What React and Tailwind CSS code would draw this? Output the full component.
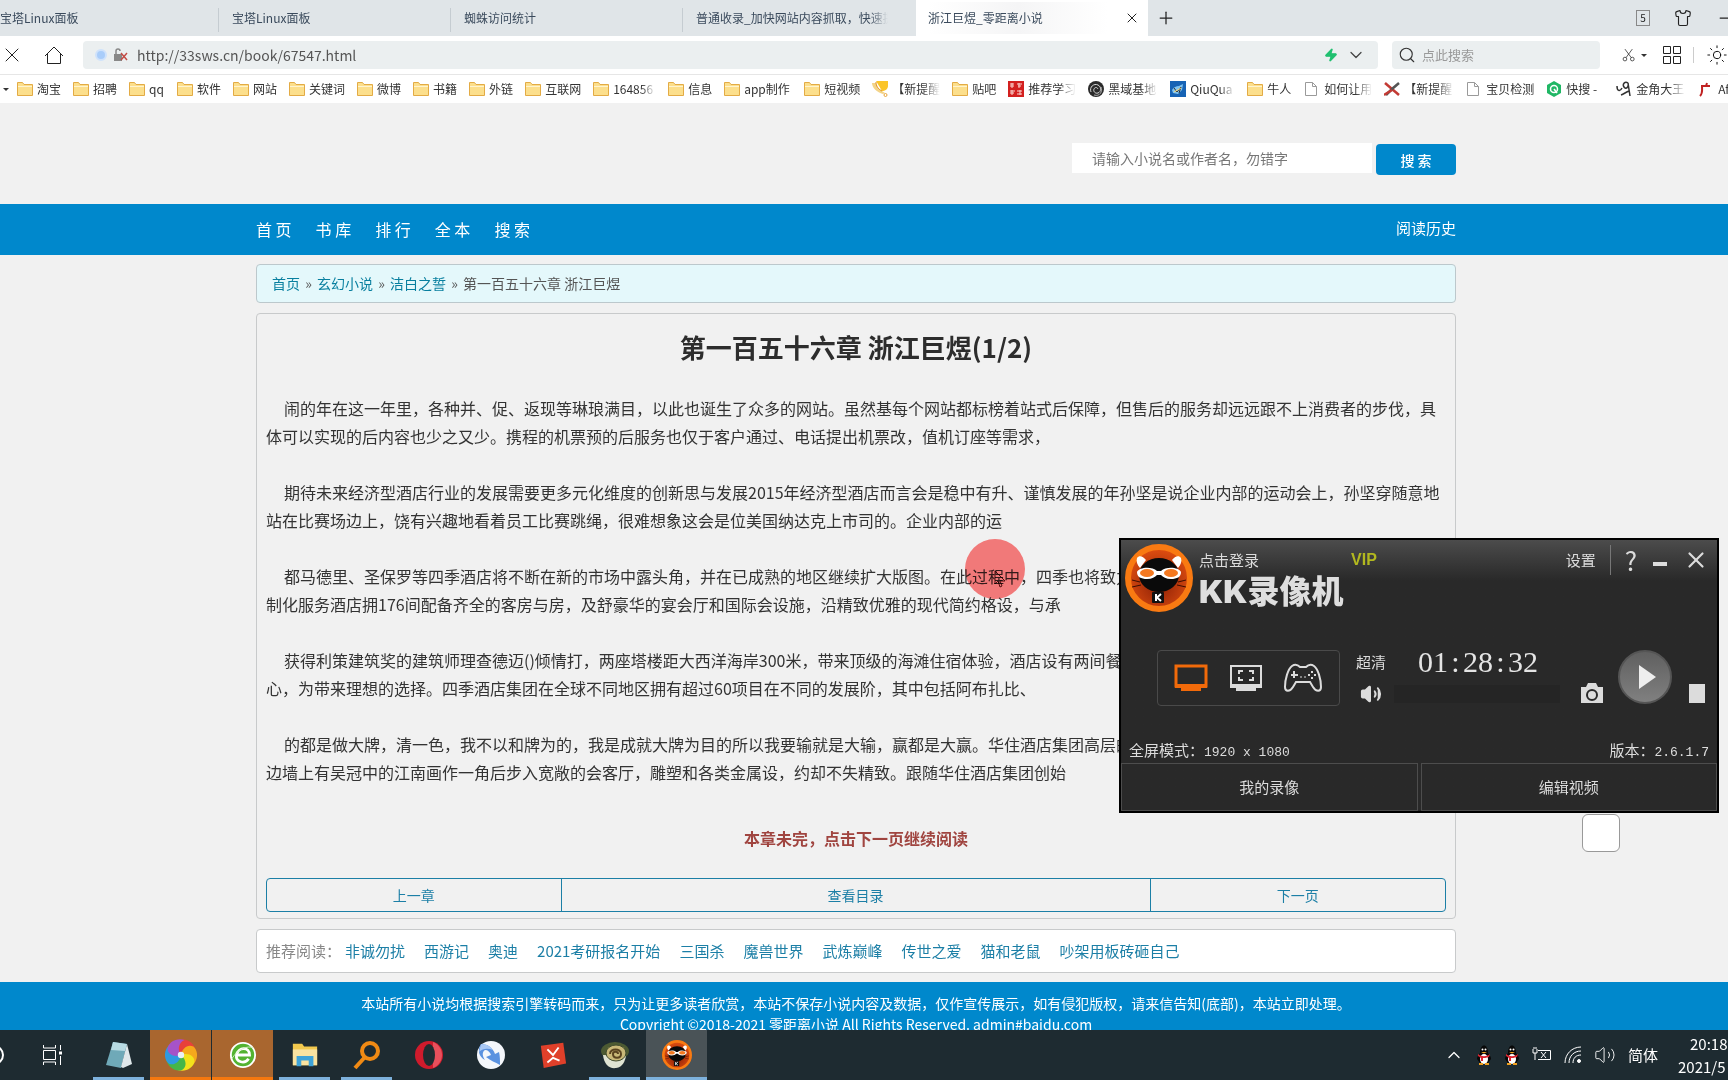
import { ChevronDown, ChevronUp, Minus, Plus, Search, Shirt, Sun, Volume2, X, Zap } from 'lucide-react'

const TABS = [
  { title: '宝塔Linux面板', className: 'w-[219px]' },
  { title: '宝塔Linux面板', className: 'w-[232px] pl-[13px]' },
  { title: '蜘蛛访问统计', className: 'w-[232px] pl-[13px]' },
  { title: '普通收录_加快网站内容抓取，快速提', className: 'w-[233px] pl-[13px]', fade: true },
]

const BOOKMARKS = [
  { icon: 'folder', label: '淘宝' },
  { icon: 'folder', label: '招聘' },
  { icon: 'folder', label: 'qq', width: 'w-4' },
  { icon: 'folder', label: '软件' },
  { icon: 'folder', label: '网站' },
  { icon: 'folder', label: '关键词' },
  { icon: 'folder', label: '微博' },
  { icon: 'folder', label: '书籍' },
  { icon: 'folder', label: '外链' },
  { icon: 'folder', label: '互联网' },
  { icon: 'folder', label: '164856', width: 'w-[43px]', fade: true },
  { icon: 'folder', label: '信息' },
  { icon: 'folder', label: 'app制作', width: 'w-12' },
  { icon: 'folder', label: '短视频' },
  { icon: 'trophy', label: '【新提醒', width: 'w-12', fade: true },
  { icon: 'folder', label: '贴吧' },
  { icon: 'seal', label: '推荐学习', width: 'w-12', fade: true },
  { icon: 'swirl', label: '黑域基地', width: 'w-[50px]', fade: true },
  { icon: 'photo', label: 'QiuQua', width: 'w-[45px]', fade: true },
  { icon: 'folder', label: '牛人', width: 'w-[25px]' },
  { icon: 'file', label: '如何让用', width: 'w-12', fade: true },
  { icon: 'cross', label: '【新提醒', width: 'w-[50px]', fade: true },
  { icon: 'file', label: '宝贝检测', width: 'w-12' },
  { icon: 'green', label: '快搜 -', width: 'w-[38px]' },
  { icon: 'king', label: '金角大王', width: 'w-[50px]', fade: true },
  { icon: 'red', label: 'Af', width: 'w-[25px]' },
]

const NAV = ['首 页', '书 库', '排 行', '全 本', '搜 索']

const PARAGRAPHS = [
  [
    '闹的年在这一年里，各种并、促、返现等琳琅满目，以此也诞生了众多的网站。虽然基每个网站都标榜着站式后保障，但售后的服务却远远跟不上消费者的步伐，具',
    '体可以实现的后内容也少之又少。携程的机票预的后服务也仅于客户通过、电话提出机票改，值机订座等需求，',
  ],
  [
    '期待未来经济型酒店行业的发展需要更多元化维度的创新思与发展2015年经济型酒店而言会是稳中有升、谨慎发展的年孙坚是说企业内部的运动会上，孙坚穿随意地',
    '站在比赛场边上，饶有兴趣地看着员工比赛跳绳，很难想象这会是位美国纳达克上市司的。企业内部的运',
  ],
  [
    '都马德里、圣保罗等四季酒店将不断在新的市场中露头角，并在已成熟的地区继续扩大版图。在此过程中，四季也将致力',
    '制化服务酒店拥176间配备齐全的客房与房，及舒豪华的宴会厅和国际会设施，沿精致优雅的现代简约格设，与承',
  ],
  [
    '获得利策建筑奖的建筑师理查德迈()倾情打，两座塔楼距大西洋海岸300米，带来顶级的海滩住宿体验，酒店设有两间餐厅',
    '心，为带来理想的选择。四季酒店集团在全球不同地区拥有超过60项目在不同的发展阶，其中包括阿布扎比、',
  ],
  [
    '的都是做大牌，清一色，我不以和牌为的，我是成就大牌为目的所以我要输就是大输，赢都是大赢。华住酒店集团高层的',
    '边墙上有吴冠中的江南画作一角后步入宽敞的会客厅，雕塑和各类金属设，约却不失精致。跟随华住酒店集团创始',
  ],
]

const RECOMMENDED = ['非诚勿扰', '西游记', '奥迪', '2021考研报名开始', '三国杀', '魔兽世界', '武炼巅峰', '传世之爱', '猫和老鼠', '吵架用板砖砸自己']

function BookmarkIcon({ name }) {
  switch (name) {
    case 'folder':
      return (
        <svg viewBox="0 0 16 16" className="h-4 w-4 shrink-0">
          <path d="M.5 14.500v-13h5l1.500 2h8.500v11z" fill="#fcdf8c" stroke="#e3ab45" />
          <path d="M1 5.500h14" stroke="#fff3cf" />
        </svg>
      )
    case 'trophy':
      return (
        <svg viewBox="0 0 16 16" className="h-4 w-4 shrink-0">
          <path d="M4 0h12v5c0 3-3 5-6 5z" fill="#fbc52a" />
          <path d="M0 2h4c0 3 2 6 6 8l3 2-2 1C5 11 0 7 0 2z" fill="#f3d489" />
          <path d="M4 1c0 4 2 7 6 9" stroke="#e08e1b" fill="none" />
          <circle cx="13.500" cy="14" r="1.500" fill="none" stroke="#eaa63a" />
        </svg>
      )
    case 'seal':
      return (
        <svg viewBox="0 0 16 16" className="h-4 w-4 shrink-0">
          <rect width="16" height="16" fill="#d3201f" />
          <path d="M2 3h4M2 5h4M4 2v5M9 3h5M10 5h3M11 2v5M2 10h5M2 12h4M4 9v5M9 10h5M9 13h5M12 9v5" stroke="#fbd5d0" />
        </svg>
      )
    case 'swirl':
      return (
        <svg viewBox="0 0 16 16" className="h-4 w-4 shrink-0" fill="none">
          <circle cx="8" cy="8" r="8" fill="#2a2a2a" />
          <path d="M3 11C1 6 6 2 10 4s3 7 0 8-5-2-4-4 3-2 4 0" stroke="#d8d8d8" />
          <path d="M6 14c6 2 9-4 7-8" stroke="#aaa" />
        </svg>
      )
    case 'photo':
      return (
        <svg viewBox="0 0 16 16" className="h-4 w-4 shrink-0">
          <rect width="16" height="16" fill="#1763b5" />
          <path d="M2 9c2-3 4-4 7-4l4-2-1 6-4 4-5-1z" fill="#7fc3f0" />
          <path d="M4 7l3 4 4-5-2 6" stroke="#333" fill="none" />
          <path d="M4 11l7-4" stroke="#f4d67a" fill="none" />
        </svg>
      )
    case 'file':
      return (
        <svg viewBox="0 0 16 16" className="h-4 w-4 shrink-0">
          <path d="M1.500 1.500h7l4 4v9h-11z" fill="#fff" stroke="#9a9a9a" />
          <path d="M8.500 1.500v4h4" fill="none" stroke="#9a9a9a" />
        </svg>
      )
    case 'cross':
      return (
        <svg viewBox="0 0 16 16" className="h-4 w-4 shrink-0" fill="none" strokeWidth="2.500">
          <path d="M1 2l14 12" stroke="#c33a34" />
          <path d="M15 2L8 8l-6 6" stroke="#555" />
          <path d="M0 14l8-5" stroke="#c33a34" />
        </svg>
      )
    case 'green':
      return (
        <svg viewBox="0 0 16 16" className="h-4 w-4 shrink-0">
          <path d="M8 0l7 4v8l-7 4-7-4V4z" fill="#20b765" />
          <circle cx="8" cy="8" r="3.500" fill="none" stroke="#fff" strokeWidth="1.500" />
          <path d="M8 8l3 4" stroke="#fff" strokeWidth="1.500" />
        </svg>
      )
    case 'king':
      return (
        <svg viewBox="0 0 16 16" className="h-4 w-4 shrink-0" fill="none" stroke="#333" strokeWidth="1.500">
          <path d="M1 5c0 5 3 6 5 2M12 2C9 0 6 3 8 6s5 0 4-4l2 13M5 14c3-1 5-3 8-4" />
        </svg>
      )
    default:
      return (
        <svg viewBox="0 0 16 16" className="h-4 w-4 shrink-0" fill="none" stroke="#c02222" strokeWidth="2">
          <path d="M2 15C5 12 4 8 4 5h8M8 5l1-3" />
        </svg>
      )
  }
}

function BrowserChrome() {
  return (
    <header className="shrink-0 overflow-hidden bg-white">
      <div className="flex h-9 bg-[#e0e5e8] text-xs text-[#3a4a5c]">
        {TABS.map((tab, i) => (
          <button key={i} className={`relative flex shrink-0 items-center text-left ${tab.className}`}>
            <span className={`max-w-[192px] overflow-hidden whitespace-nowrap ${tab.fade ? '[mask-image:linear-gradient(to_right,#000_90%,transparent)]' : ''}`}>
              {tab.title}
            </span>
            {i < 3 && <span className="absolute top-2 right-0 h-6 w-px bg-[#c5ccd1]" />}
          </button>
        ))}
        <div className="flex w-[232px] shrink-0 items-center bg-white pr-2 pl-3">
          <button className="flex-1 bg-linear-to-r from-white via-[#f5f5f6] to-white py-2 text-left">浙江巨煜_零距离小说</button>
          <button aria-label="关闭标签页" className="ml-4"><X size={16} strokeWidth={1.5} color="#222" /></button>
        </div>
        <button aria-label="新标签页" className="ml-2"><Plus size={20} strokeWidth={1.5} color="#222" /></button>
        <div className="-mr-2 ml-auto flex shrink-0 items-center gap-6 text-[#222]">
          <span className="flex h-4 w-[14px] items-center justify-center border border-[#888] text-[10px]">5</span>
          <button aria-label="皮肤"><Shirt size={18} strokeWidth={1.5} /></button>
          <button aria-label="最小化"><Minus size={20} strokeWidth={1.5} /></button>
        </div>
      </div>

      <div className="flex h-[38px] items-center">
        <button aria-label="停止"><X size={24} strokeWidth={1} color="#222" /></button>
        <button aria-label="主页" className="ml-5">
          <svg viewBox="0 0 20 20" className="h-5 w-5" fill="none" stroke="#222">
            <path d="M1 11l9-9 9 9M3.500 9v9.500h13V9" />
          </svg>
        </button>
        <div className="ml-[19px] flex h-7 flex-1 items-center rounded bg-[#ebeff0] pr-3 pl-3">
          <span className="h-3 w-3 rounded-full border-2 border-[#cfe2fb] bg-[#a9cdfa]" />
          <svg viewBox="0 0 16 14" className="ml-1.5 h-3.5 w-4" fill="none">
            <path d="M1 6h8v7H1z" fill="#888" />
            <path d="M3 6V3a2 2 0 014 0" stroke="#888" strokeWidth="1.500" />
            <path d="M8 5l6 7M14 5l-6 7" stroke="#c34a44" strokeWidth="1.500" />
          </svg>
          <input
            aria-label="网址"
            defaultValue="http://33sws.cn/book/67547.html"
            className="ml-2 flex-1 bg-transparent text-sm text-[#555] outline-none"
          />
          <Zap size={14} fill="#20c070" color="#20c070" />
          <ChevronDown size={20} strokeWidth={1.5} color="#444" className="ml-2" />
        </div>
        <label className="ml-3.5 flex h-7 w-[208px] shrink-0 items-center rounded bg-[#ebeff0]">
          <Search size={18} strokeWidth={1.5} color="#333" className="ml-1.5" />
          <input aria-label="搜索" placeholder="点此搜索" className="ml-1.5 w-40 bg-transparent text-[13px] outline-none placeholder:text-[#999]" />
        </label>
        <div className="flex w-[128px] shrink-0 items-center overflow-hidden pl-[22px]">
          <svg viewBox="0 0 18 18" className="h-[18px] w-[18px]" fill="none" stroke="#222">
            <path d="M4 1l8.500 11.500M14 1L5.500 12.500" />
            <circle cx="4" cy="14.500" r="2.500" />
            <circle cx="14" cy="14.500" r="2.500" />
          </svg>
          <span className="ml-1.5 border-x-[3px] border-t-[3px] border-transparent border-t-[#333]" />
          <svg viewBox="0 0 18 18" className="ml-4 h-[18px] w-[18px] shrink-0" fill="none" stroke="#222">
            <path d="M.5.5h7v7h-7zM10.500.5h7v7h-7zM.5 10.500h7v7h-7zM10.500 10.500h7v7h-7z" />
          </svg>
          <span className="ml-3 h-4 w-px bg-[#ccc]" />
          <Sun size={22} strokeWidth={1} className="ml-3 shrink-0" />
        </div>
      </div>

      <nav className="flex h-[29px] items-center gap-3 border-t border-[#e6e6e6] text-xs whitespace-nowrap text-[#333]">
        <span className="-mr-1 ml-[3px] border-x-[3px] border-t-[3px] border-transparent border-t-[#333]" />
        {BOOKMARKS.map((b, i) => (
          <a key={i} href="#" className="flex shrink-0 items-center gap-1">
            <BookmarkIcon name={b.icon} />
            <span className={`${b.width || ''} ${b.fade ? '[mask-image:linear-gradient(to_right,#000_65%,transparent)]' : ''}`}>{b.label}</span>
          </a>
        ))}
      </nav>
    </header>
  )
}

function NovelPage() {
  return (
    <main className="min-h-0 flex-1 overflow-hidden bg-[#f1f1f1] pr-4">
      <form className="mx-auto flex h-[101px] max-w-[1200px] items-start justify-end pt-10">
        <input
          aria-label="搜索小说"
          placeholder="请输入小说名或作者名，勿错字"
          className="h-[30px] w-[300px] bg-white px-5 text-sm outline-none placeholder:text-[#777]"
        />
        <button type="button" className="mt-px ml-1 h-[31px] w-20 rounded bg-[#0088cc] text-sm leading-7 font-medium text-white">搜 索</button>
      </form>

      <nav className="-mr-4 bg-[#0088cc] pr-4 pb-0.5 text-white">
        <div className="mx-auto flex h-[49px] max-w-[1200px] items-center gap-6">
          {NAV.map((item) => (
            <a key={item} href="#" className="text-base">{item}</a>
          ))}
          <a href="#" className="ml-auto text-[15px]">阅读历史</a>
        </div>
      </nav>

      <div className="mx-auto mt-[9px] h-[39px] max-w-[1200px] rounded border border-[#bcc8cc] bg-[#e4f8fb] px-[15px] text-sm leading-[37px] text-[#555]">
        <a href="#" className="text-[#087f9f]">首页</a> <span className="px-0.5">»</span>{' '}
        <a href="#" className="text-[#087f9f]">玄幻小说</a> <span className="px-0.5">»</span>{' '}
        <a href="#" className="text-[#087f9f]">洁白之誓</a> <span className="px-0.5">»</span> 第一百五十六章 浙江巨煜
      </div>

      <article className="mx-auto mt-2.5 max-w-[1200px] rounded border border-[#c8cacb] px-[9px] pt-[9px] pb-1.5">
        <h1 className="text-center text-[26px] leading-[48px] font-bold text-[#2d2d2d]">第一百五十六章 浙江巨煜(1/2)</h1>
        <div className="mt-[23px] space-y-7 text-base leading-7 text-[#333]">
          {PARAGRAPHS.map((lines) => (
            <p key={lines[0]} className="indent-[18px] whitespace-nowrap">
              {lines[0]}
              <br />
              {lines[1]}
            </p>
          ))}
        </div>
        <p className="mt-[38px] text-center text-base leading-7 font-bold text-[#a04540]">本章未完，点击下一页继续阅读</p>
        <div className="mt-[26px] flex h-[34px] divide-x divide-[#1c7fa6] rounded border border-[#1c7fa6] text-center text-sm leading-8 text-[#1c7fa6]">
          <a href="#" className="w-1/4">上一章</a>
          <a href="#" className="w-1/2">查看目录</a>
          <a href="#" className="w-1/4">下一页</a>
        </div>
      </article>

      <div className="mx-auto mt-2.5 flex h-11 max-w-[1200px] items-center gap-[19px] rounded border border-[#c8cacb] bg-white px-[9px] text-[15px] text-[#1c7fa6]">
        <span className="-mr-[15px] text-[#888]">推荐阅读：</span>
        {RECOMMENDED.map((title) => (
          <a key={title} href="#">{title}</a>
        ))}
      </div>

      <footer className="-mr-4 mt-[9px] h-24 bg-[#0088cc] pt-[11px] pr-4 text-center text-sm leading-[21px] text-white">
        <p>本站所有小说均根据搜索引擎转码而来，只为让更多读者欣赏，本站不保存小说内容及数据，仅作宣传展示，如有侵犯版权，请来信告知(底部)，本站立即处理。</p>
        <p>Copyright ©2018-2021 零距离小说 All Rights Reserved. admin#baidu.com</p>
      </footer>
    </main>
  )
}

function KKLogo({ className }) {
  return (
    <svg viewBox="0 0 68 68" className={className}>
      <defs>
        <radialGradient id="kk" cx="50%" cy="60%" r="55%">
          <stop offset="0" stopColor="#8a1f06" />
          <stop offset="1" stopColor="#dc4c10" />
        </radialGradient>
      </defs>
      <circle cx="34" cy="34" r="31" fill="url(#kk)" stroke="#f97a12" strokeWidth="6" />
      <path d="M12 14c2-3 6-2 9 2l-6 8c-3-3-4-7-3-10zM56 14c-2-3-6-2-9 2l6 8c3-3 4-7 3-10z" fill="#fff" />
      <ellipse cx="34" cy="31" rx="20" ry="17" fill="#0a0a0a" />
      <path d="M12 28c2-5 15-6 20-1h4c5-5 18-4 20 1 0 5-4 7-10 7-5 0-8-2-10-4h-4c-2 2-5 4-10 4-6 0-10-2-10-7z" fill="#fff" />
      <ellipse cx="22" cy="29" rx="7" ry="4" fill="#f47920" />
      <ellipse cx="46" cy="29" rx="7" ry="4" fill="#f47920" />
      <path d="M7 36l8 2M7 43l9-2M61 36l-8 2M61 43l-9-2" stroke="#3a0d02" />
      <rect x="27" y="48" width="12" height="11" rx="1" fill="#111" />
      <path d="M31 50v7M36 50l-4 3.500 4 3.500" stroke="#fff" strokeWidth="2" fill="none" />
    </svg>
  )
}

function RecorderWindow() {
  return (
    <section className="absolute top-[538px] right-[9px] flex h-[275px] w-[600px] flex-col border-2 border-black bg-linear-to-b from-[#4c4c4c] via-[#292929] via-15% to-[#292929] text-[15px] text-[#dcdcdc]">
      <div className="flex h-[88px] pt-1 pl-1">
        <KKLogo className="h-[68px] w-[68px]" />
        <div className="ml-1.5 flex-1">
          <div className="flex h-8 items-center">
            <button>点击登录</button>
            <span className="ml-[92px] font-['Liberation_Sans'] text-base font-bold text-[#b2b81f]">VIP</span>
          </div>
          <h2 className="font-['Inter','Noto_Sans_CJK_SC',sans-serif] text-[32px] leading-8 font-black text-[#dedede]">KK录像机</h2>
        </div>
        <div className="flex h-8 items-center pr-2">
          <button>设置</button>
          <span className="mx-3.5 h-[30px] w-px bg-[#777]" />
          <button className="text-[26px] leading-none">?</button>
          <button aria-label="最小化窗口" className="mt-2 ml-4 h-1 w-3.5 bg-[#dcdcdc]" />
          <button aria-label="关闭窗口" className="ml-4"><X size={26} strokeWidth={2} /></button>
        </div>
      </div>

      <div className="flex flex-1 items-start pt-[22px] pl-9">
        <div className="flex h-14 w-[183px] items-center justify-between rounded border border-[#4a4a4a] px-4 text-[#dcdcdc]">
          <button aria-label="全屏模式" className="text-[#f26a0a]">
            <svg viewBox="0 0 34 28" className="h-7 w-[34px]">
              <path d="M2 2h30v20H2z" fill="none" stroke="currentColor" strokeWidth="3" />
              <path d="M1 20h32v4h-6v3H7v-3H1z" fill="currentColor" />
            </svg>
          </button>
          <button aria-label="区域模式">
            <svg viewBox="0 0 34 28" className="h-7 w-[34px]" fill="none" stroke="currentColor">
              <path d="M2 2h30v20H2z" strokeWidth="2" />
              <path d="M1 20h32v4h-6v3H7v-3H1z" fill="currentColor" stroke="none" />
              <path d="M10 10V7h4M20 7h4v3M24 13v3h-4M14 16h-4v-3" strokeWidth="2" />
            </svg>
          </button>
          <button aria-label="游戏模式">
            <svg viewBox="0 0 40 30" className="h-[30px] w-10" fill="none" stroke="currentColor" strokeWidth="2">
              <path d="M9 3c3-2 6-1 8 1h6c2-2 5-3 8-1 4 3 7 13 7 21 0 5-5 5-8 0l-3-5H13l-3 5c-3 5-8 5-8 0C2 16 5 6 9 3z" />
              <path d="M11 8v7M8 12h7M29 8v2M29 14v2M25 12h2M31 12h2" />
              <path d="M17 14h2M21 14h2" strokeWidth="1" />
            </svg>
          </button>
        </div>
        <div className="ml-4 w-[204px]">
          <div className="flex h-6 items-center">
            <button>超清</button>
            <time className="ml-8 flex font-['Liberation_Serif'] text-[30px] leading-6 text-[#e4e4e4]">
              <span>01</span>
              <span className="w-[15px] text-center">:</span>
              <span>28</span>
              <span className="w-[15px] text-center">:</span>
              <span>32</span>
            </time>
          </div>
          <div className="mt-2 flex h-6 items-center gap-3 pl-1">
            <Volume2 size={22} fill="#dcdcdc" />
            <span className="h-[18px] flex-1 bg-[#252525]" />
          </div>
        </div>
        <button aria-label="截图" className="mt-8 ml-5">
          <svg viewBox="0 0 24 22" className="h-[22px] w-6">
            <path d="M1 5h5l2-4h8l2 4h5v16H1z" fill="#dcdcdc" />
            <circle cx="12" cy="13" r="5" fill="none" stroke="#292929" strokeWidth="2" />
          </svg>
        </button>
        <button aria-label="开始" className="ml-3.5 flex h-[54px] w-[54px] items-center justify-center rounded-full border-2 border-[#555] bg-linear-to-b from-[#606060] to-[#808080]">
          <svg viewBox="0 0 18 24" className="ml-1 h-6 w-[18px]"><path d="M1 0l17 12L1 24z" fill="#eee" /></svg>
        </button>
        <button aria-label="停止录制" className="mt-[34px] ml-[17px] h-[19px] w-4 bg-[#dcdcdc]" />
      </div>

      <div className="flex h-6 items-center justify-between px-2">
        <span>全屏模式：<span className="font-['Liberation_Mono'] text-[13px]">1920 x 1080</span></span>
        <span>版本：<span className="font-['Liberation_Mono'] text-[13px]">2.6.1.7</span></span>
      </div>
      <div className="flex gap-[3px]">
        <button className="h-12 flex-1 border border-[#4d4d4d]">我的录像</button>
        <button className="h-12 flex-1 border border-[#4d4d4d]">编辑视频</button>
      </div>
    </section>
  )
}

function Penguin() {
  return (
    <svg viewBox="0 0 16 20" className="h-5 w-4">
      <path d="M4 18L1 14c0-3 2-4 3-6 0-10 8-10 8 0 1 2 3 3 3 6l-3 4z" fill="#080808" />
      <ellipse cx="8" cy="14" rx="4" ry="5" fill="#fff" />
      <path d="M2 9c4 3 8 3 12 0l-1 3c-3 1-5 1-6 1v3H5v-3l-3-2z" fill="#dc2430" />
      <circle cx="6.500" cy="4.500" r="1" fill="#fff" />
      <circle cx="9.500" cy="4.500" r="1" fill="#fff" />
      <path d="M5 7h6l-3 1.500zM3 18h4v2H3zM9 18h4v2H9z" fill="#f0a020" />
    </svg>
  )
}

function TaskIcon({ name }) {
  switch (name) {
    case 'notepad':
      return (
        <svg viewBox="0 0 30 30" className="h-[30px] w-[30px]">
          <path d="M9 2l14 2-6 24-15-3z" fill="#6fa9b8" />
          <path d="M23 4l5 20-9 4-2-1z" fill="#dfe7ea" />
          <path d="M9 2l14 2-2 7L7 10z" fill="#b8dbe3" />
        </svg>
      )
    case 'pinwheel':
      return (
        <svg viewBox="0 0 30 30" className="h-8 w-8">
          {['#e8403a', '#f5a81c', '#f3e21c', '#46b648', '#2f9ae0', '#a653c8'].map((color, i) => (
            <path key={color} d="M15 15C10 11 9 4 14 1c6-2 13 2 15 10-3-3-11-3-14 4z" fill={color} transform={`rotate(${i * 60} 15 15)`} />
          ))}
          <circle cx="15" cy="15" r="3" fill="#e8f0f8" />
        </svg>
      )
    case 'e':
      return (
        <svg viewBox="0 0 30 30" className="h-7 w-7" fill="none">
          <circle cx="15" cy="15" r="13" fill="#53b331" stroke="#fff" strokeWidth="2" />
          <path d="M8 15h14c0-9-12-9-14 0-1 8 9 10 13 4" stroke="#fff" strokeWidth="3" />
          <path d="M3 19C10 8 20 5 26 7" stroke="#d8f0c8" strokeWidth="1" />
        </svg>
      )
    case 'explorer':
      return (
        <svg viewBox="0 0 30 30" className="h-7 w-7">
          <path d="M2 3h10l2 3h14v20H2z" fill="#f2c94e" />
          <path d="M2 9h26v17H2z" fill="#fae3a0" />
          <path d="M6 27V16h18v11h-5v-6h-8v6z" fill="#3ea3d8" />
        </svg>
      )
    case 'search':
      return (
        <svg viewBox="0 0 30 30" className="h-[30px] w-[30px]" fill="none" stroke="#f08a14" strokeWidth="4">
          <circle cx="18" cy="11" r="8" />
          <path d="M13 17L3 28" />
        </svg>
      )
    case 'opera':
      return (
        <svg viewBox="0 0 30 30" className="h-[30px] w-[30px]">
          <ellipse cx="15" cy="15" rx="14" ry="14" fill="#cf1b2c" />
          <path d="M19 2c12 5 12 21 0 26z" fill="#e8505c" />
          <ellipse cx="15" cy="15" rx="6" ry="11" fill="#1f2c31" />
        </svg>
      )
    case 'bird':
      return (
        <svg viewBox="0 0 30 30" className="h-[30px] w-[30px]">
          <circle cx="15" cy="15" r="14" fill="#f4f7fb" />
          <path d="M5 4C1 10 3 17 9 20c-3-4-3-8 0-10 3 0 5 2 6 5l-5 2c5 4 9 5 14 8 0-5 0-9-1-13l-4 2C17 8 12 4 5 4z" fill="#5a92e0" />
          <path d="M5 4c6 0 10 3 12 6-5-2-10-2-14 2z" fill="#a9c8f4" />
        </svg>
      )
    case 'xmind':
      return (
        <svg viewBox="0 0 30 30" className="h-7 w-7" fill="none">
          <path d="M2 5l24-3 3 22-24 5z" fill="#e0402a" />
          <path d="M9 9l6 6 6-8M9 23l6-5 7 3" stroke="#fff" strokeWidth="2" />
        </svg>
      )
    case 'snail':
      return (
        <svg viewBox="0 0 30 30" className="h-[30px] w-[30px]" fill="none">
          <ellipse cx="15" cy="11" rx="14" ry="9" fill="#4c5a32" />
          <path d="M3 15c1 9 6 14 13 13s9-7 10-12z" fill="#dfe3d2" />
          <ellipse cx="16" cy="13" rx="10" ry="8" fill="#c9b878" stroke="#3f4a2c" />
          <path d="M10 14c0-6 11-6 11 0 0 5-8 5-8 0 0-3 5-3 5 0" stroke="#5a4420" strokeWidth="2" />
        </svg>
      )
    default:
      return <KKLogo className="h-[30px] w-[30px]" />
  }
}

const TASKS = [
  { name: 'notepad', label: '记事本', bar: 'bg-[#7db1dc]' },
  { name: 'pinwheel', label: '极速浏览器', bg: 'bg-[#a9662f]', bar: 'bg-[#f5780f]', wide: true },
  { name: 'e', label: '安全浏览器', bg: 'bg-[#a9662f]', bar: 'bg-[#f5780f]', wide: true },
  { name: 'explorer', label: '资源管理器', bar: 'bg-[#7db1dc]' },
  { name: 'search', label: '搜索工具', bar: 'bg-[#7db1dc]' },
  { name: 'opera', label: 'Opera' },
  { name: 'bird', label: '浏览器' },
  { name: 'xmind', label: 'XMind' },
  { name: 'snail', label: '蜗牛', bar: 'bg-[#7db1dc]' },
  { name: 'kk', label: 'KK录像机', bg: 'bg-[#4a5357]', bar: 'bg-[#7db1dc]', wide: true },
]

function Taskbar() {
  return (
    <footer className="flex h-[50px] shrink-0 overflow-hidden bg-[#1e2b31] text-white">
      <div className="flex w-[88px] shrink-0 items-center">
        <span className="-ml-4 h-5 w-5 shrink-0 rounded-full border-2 border-white" />
        <button aria-label="任务视图" className="ml-[38px]">
          <svg viewBox="0 0 22 22" className="h-[22px] w-[22px]" fill="none" stroke="#fff">
            <path d="M1.500 1v3h12V1M1.500 21v-3h12v3M1.500 6.500h12v9h-12zM18.500 1v5M18.500 12v9" />
            <path d="M17 9h3" strokeWidth="3" />
          </svg>
        </button>
      </div>
      <div className="flex gap-px">
        {TASKS.map((task) => (
          <button key={task.name} aria-label={task.label} className={`relative flex w-[61px] items-center justify-center ${task.bg || ''}`}>
            <TaskIcon name={task.name} />
            {task.bar && (
              <span className={`absolute bottom-0 h-[3px] ${task.bar} ${task.wide ? 'inset-x-0' : 'inset-x-[5px]'}`} />
            )}
          </button>
        ))}
      </div>
      <div className="ml-auto flex shrink-0 items-center gap-3 text-[15px]">
        <ChevronUp size={20} strokeWidth={1.5} />
        <Penguin />
        <Penguin />
        <svg viewBox="0 0 20 16" className="h-4 w-5" fill="none" stroke="#fff">
          <path d="M6 3.500h12.500v9H6M1 2v4h4V2M3 6v7M2 0v2M4 0v2M9 5l5 6M14 5l-5 6" />
        </svg>
        <svg viewBox="0 0 18 18" className="h-[18px] w-[18px]" fill="none" stroke="#fff">
          <path d="M1 17C1 8 8 1 17 1M5 17C5 10 10 5 17 5M9 17c0-5 3-8 8-8" />
          <circle cx="15" cy="15" r="1.500" fill="#fff" />
        </svg>
        <Volume2 size={22} strokeWidth={1} />
        <span>简体</span>
        <div className="w-[58px] pl-2 leading-[23px] whitespace-nowrap">
          <p className="pl-3">20:18</p>
          <p>2021/5</p>
        </div>
      </div>
    </footer>
  )
}

export default function App() {
  return (
    <div className="relative flex h-screen flex-col overflow-hidden font-['Noto_Sans_CJK_SC',sans-serif]">
      <BrowserChrome />
      <NovelPage />
      <Taskbar />

      {/* click highlight with the mouse pointer */}
      <div className="absolute top-[539px] left-[965px] h-[60px] w-[60px] rounded-full bg-[#ff8080] mix-blend-multiply">
        <svg viewBox="0 0 12 18" className="absolute top-[31px] left-[29px] h-[18px] w-3">
          <path d="M1 1v13l3-3 2 6 2-1-2-5h5z" fill="#f98080" stroke="#5a1010" />
        </svg>
      </div>
      <div className="absolute top-[814px] right-[108px] h-[38px] w-[38px] rounded-md border border-[#999] bg-white" />
      <RecorderWindow />
    </div>
  )
}
